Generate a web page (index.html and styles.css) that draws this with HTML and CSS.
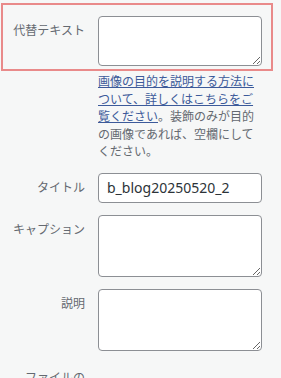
FILE: index.html
```html
<!DOCTYPE html>
<html lang="ja">
<head>
  <meta charset="UTF-8">
  <link rel="stylesheet" href="styles.css">
</head>
<body>
<div class="details">
  <div class="alt-box">
    <div class="row">
      <label class="label">代替テキスト</label>
      <textarea class="field area-alt"></textarea>
    </div>
  </div>
  <p class="help"><a href="#">画像の目的を説明する方法について、詳しくはこちらをご覧ください</a>。装飾のみが目的の画像であれば、空欄にしてください。</p>

  <div class="row">
    <label class="label">タイトル</label>
    <input class="field text" type="text" value="b_blog20250520_2">
  </div>
  <div class="row">
    <label class="label">キャプション</label>
    <textarea class="field area"></textarea>
  </div>
  <div class="row">
    <label class="label">説明</label>
    <textarea class="field area"></textarea>
  </div>
  <div class="row">
    <label class="label">ファイルの URL:</label>
  </div>
</div>
</body>
</html>
```

FILE: styles.css
```css
body {
  margin: 0;
  background-color: #f6f7f7;
  color: #646970;
  font-family: "Noto Sans", "Noto Sans CJK JP", sans-serif;
  overflow: hidden;
}

.details {
  width: 281px;
}

.alt-box {
  margin: 3px 8px 0 1px;
  padding: 11px 0 3px;
  border: 2px solid #e98a8a;
}

.alt-box .row {
  margin: 0;
  grid-template-columns: 95px 164px;
}

.row {
  display: grid;
  grid-template-columns: 98px 164px;
  align-items: start;
  margin-top: 12px;
}

.label {
  padding: 6px 13px 0 0;
  font-size: 12px;
  line-height: 18px;
  text-align: right;
  color: #646970;
}

.field {
  box-sizing: border-box;
  width: 164px;
  margin: 0;
  border: 1px solid #8c8f94;
  border-radius: 4px;
  background: #fff;
  font-family: "Noto Sans", "Noto Sans CJK JP", sans-serif;
  color: #2c3338;
}

.area-alt {
  height: 50px;
}

.area {
  height: 62px;
}

.text {
  height: 30px;
  padding: 0 8px;
  font-size: 14px;
}

.help {
  width: 163px;
  margin: 2px 0 0 98px;
  font-size: 12px;
  line-height: 17.5px;
  color: #646970;
}

.help a {
  color: #3c5a9a;
}
```
